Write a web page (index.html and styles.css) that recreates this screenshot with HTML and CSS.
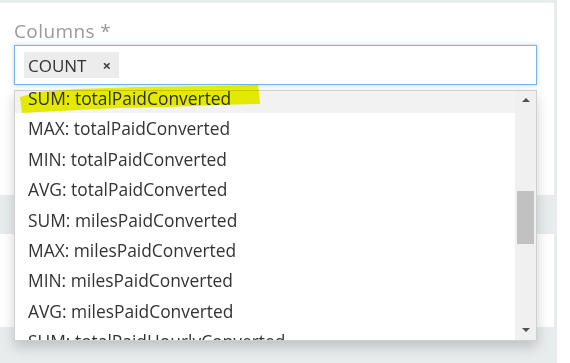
FILE: index.html
```html
<!DOCTYPE html>
<html lang="en">
<head>
  <meta charset="UTF-8" />
  <title>Columns</title>
  <link rel="stylesheet" href="styles.css">
</head>
<body>
  <div class="page">
    <div class="panel panel-top">
      <label class="field-label">Columns *</label>
      <div class="field">
        <div class="select-box">
          <span class="tag">COUNT <span class="tag-remove">×</span></span>
        </div>

        <div class="dropdown">
          <ul class="options">
            <li class="active">SUM: totalPaidConverted</li>
            <li>MAX: totalPaidConverted</li>
            <li>MIN: totalPaidConverted</li>
            <li>AVG: totalPaidConverted</li>
            <li>SUM: milesPaidConverted</li>
            <li>MAX: milesPaidConverted</li>
            <li>MIN: milesPaidConverted</li>
            <li>AVG: milesPaidConverted</li>
            <li>SUM: totalPaidHourlyConverted</li>
          </ul>
          <div class="scrollbar">
            <span class="arrow arrow-up"></span>
            <div class="track"><div class="thumb"></div></div>
            <span class="arrow arrow-down"></span>
          </div>
        </div>

        <!-- highlighter mark from the screenshot -->
        <svg class="marker" width="250" height="32" viewBox="0 0 250 32">
          <path d="M2 14 L20 9 L60 6 L120 4 L200 3 L240 2 L241 10 L242 21 L200 22 L150 24 L100 25 L60 27 L20 29 L4 30 Z" />
        </svg>
      </div>
    </div>
    <div class="gap"></div>
    <div class="panel panel-mid"></div>
  </div>
</body>
</html>
```

FILE: styles.css
```css
html, body {
  margin: 0;
  background: #fff;
}
body {
  font-family: "Open Sans", Arial, sans-serif;
  color: #333;
}
.page {
  width: 557px;
  height: 363px;
  background: #e8ecec;
  padding-top: 3px;
  box-sizing: border-box;
}
.panel {
  width: 554px;
  background: #fff;
}
.panel-top {
  height: 192px;
  padding: 16px 17px 0 14px;
  box-sizing: border-box;
}
.gap {
  height: 39px;
}
.panel-mid {
  height: 93px;
}
.field-label {
  display: block;
  font-size: 19px;
  line-height: 25px;
  letter-spacing: 0.4px;
  color: #9a9a9a;
  margin-bottom: 1px;
}
.field {
  position: relative;
}
.select-box {
  height: 40px;
  box-sizing: border-box;
  border: 1px solid #75b6ea;
  box-shadow: 0 0 4px rgba(102, 175, 233, 0.55);
  padding: 6px 9px;
}
.tag {
  display: inline-flex;
  align-items: center;
  height: 26px;
  padding: 0 8px 0 4px;
  background: #ececec;
  font-size: 17px;
  color: #333;
}
.tag-remove {
  margin-left: 16px;
  font-size: 15px;
  font-weight: bold;
  color: #444;
}
.dropdown {
  position: absolute;
  left: 0;
  right: 0;
  top: 45px;
  height: 251px;
  box-sizing: border-box;
  border: 1px solid #cfcfcf;
  background: #fff;
  box-shadow: 0 6px 12px rgba(0, 0, 0, 0.18);
  display: flex;
  overflow: hidden;
}
.options {
  flex: 1;
  list-style: none;
  margin: -8px 0 0 0;
  padding: 0;
}
.options li {
  height: 30.4px;
  line-height: 30.4px;
  padding-left: 13px;
  font-size: 17.4px;
  color: #333;
  white-space: nowrap;
}
.options li.active {
  background: #f2f2f2;
}
.scrollbar {
  width: 21px;
  background: #f0f0f0;
  display: flex;
  flex-direction: column;
  align-items: center;
}
.arrow {
  width: 0;
  height: 0;
  border-left: 4px solid transparent;
  border-right: 4px solid transparent;
}
.arrow-up {
  margin-top: 7px;
  border-bottom: 4px solid #505050;
}
.arrow-down {
  margin-bottom: 8px;
  border-top: 4px solid #505050;
}
.track {
  flex: 1;
  width: 100%;
  padding-top: 89px;
}
.thumb {
  height: 53px;
  margin-left: 2px;
  width: 17px;
  background: #c1c1c1;
}
.marker {
  position: absolute;
  left: 4px;
  top: 38px;
  mix-blend-mode: multiply;
}
.marker path {
  fill: #f0f600;
}
```
